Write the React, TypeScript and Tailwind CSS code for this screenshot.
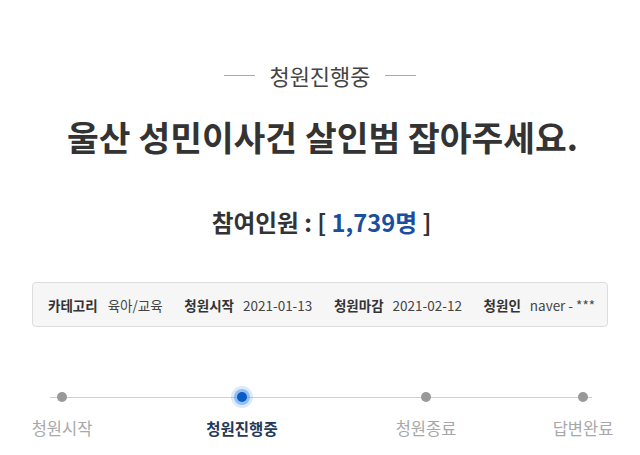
import React from "react";

const font = { fontFamily: '"Noto Sans CJK KR", "Noto Sans", sans-serif' };

function Step({ label, active, className }: { label: string; active?: boolean; className?: string }) {
  return (
    <div className={`flex w-[80px] flex-col items-center ${className ?? ""}`}>
      <div className="flex h-[22px] items-center justify-center">
        {active ? (
          <div className="h-[10px] w-[10px] rounded-full bg-[#0b5cc4] shadow-[0_0_0_3px_rgba(60,140,235,0.45),0_0_0_6px_rgba(60,140,235,0.18)]" />
        ) : (
          <div className="h-[10px] w-[10px] rounded-full bg-[#999]" />
        )}
      </div>
      <div
        className={`mt-[9px] whitespace-nowrap leading-[22px] ${
          active ? "text-[15.5px] font-bold text-[#23385a]" : "text-[16.5px] text-[#a8a8a8]"
        }`}
      >
        {label}
      </div>
    </div>
  );
}

export default function App() {
  return (
    <div className="h-[455px] w-[640px] overflow-hidden bg-white" style={font}>
      <div className="flex items-center justify-center pt-[60px]">
        <div className="h-px w-[31px] bg-[#aaa]" />
        <div className="mx-[14px] text-[22px] leading-[30px] text-[#444]">청원진행중</div>
        <div className="h-px w-[31px] bg-[#aaa]" />
      </div>
      <h1 className="ml-[5px] mt-[24px] whitespace-nowrap text-center text-[34.5px] font-bold leading-[44px] text-[#333]">
        울산 성민이사건 살인범 잡아주세요.
      </h1>
      <div className="ml-[3px] mt-[48px] text-center text-[23.7px] font-bold leading-[32px] text-[#333]">
        참여인원 : [ <span className="text-[#1a4f9f]">1,739명</span> ]
      </div>
      <div className="mx-[32px] mt-[44px] flex h-[45px] items-center justify-between rounded-[4px] border border-[#ddd] bg-[#f6f6f6] pl-[15px] pr-[12px] text-[13.5px] leading-[18px]">
        <div className="flex items-center gap-[10px]">
          <span className="font-bold text-[#333]">카테고리</span>
          <span className="text-[#444]">육아/교육</span>
        </div>
        <div className="flex items-center gap-[9px]">
          <span className="font-bold text-[#333]">청원시작</span>
          <span className="text-[#444]">2021-01-13</span>
        </div>
        <div className="flex items-center gap-[9px]">
          <span className="font-bold text-[#333]">청원마감</span>
          <span className="text-[#444]">2021-02-12</span>
        </div>
        <div className="flex items-center gap-[9px]">
          <span className="font-bold text-[#333]">청원인</span>
          <span className="text-[#444]">naver - ***</span>
        </div>
      </div>
      <div className="relative mt-[59px]">
        <div className="absolute left-[50px] top-[11px] h-px w-[542px] bg-[#d0d0d0]" />
        <div className="relative flex">
          <Step label="청원시작" className="ml-[22px]" />
          <Step label="청원진행중" active className="ml-[100px]" />
          <Step label="청원종료" className="ml-[104px]" />
          <Step label="답변완료" className="ml-[77px]" />
        </div>
      </div>
    </div>
  );
}
